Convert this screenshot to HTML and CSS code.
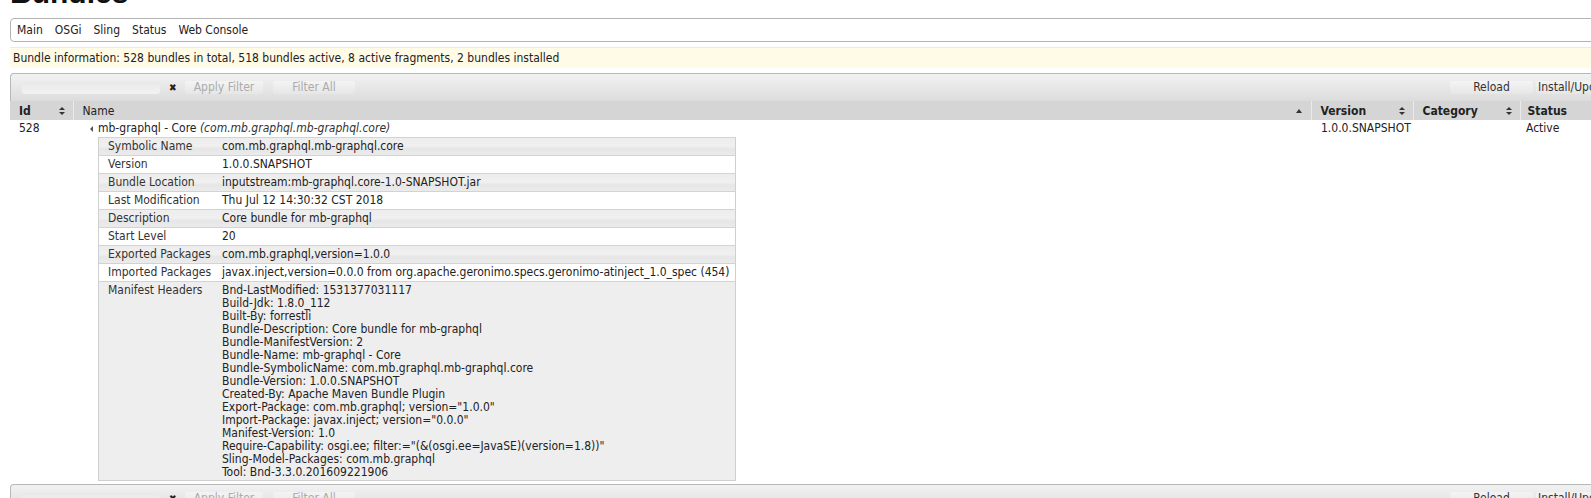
FILE: index.html
```html
<!DOCTYPE html>
<html>
<head>
<meta charset="utf-8">
<link rel="stylesheet" href="styles.css">
</head>
<body>
<div class="page">
  <h1 class="title">Bundles</h1>
  <div class="nav">
    <span>Main</span><span>OSGi</span><span>Sling</span><span>Status</span><span>Web Console</span>
  </div>
  <div class="info">Bundle information: 528 bundles in total, 518 bundles active, 8 active fragments, 2 bundles installed</div>

  <div class="toolbar">
    <div class="tb-left">
      <span class="filter-input"></span>
      <span class="clear">&#10006;</span>
      <span class="btn disabled apply">Apply Filter</span>
      <span class="btn disabled fall">Filter All</span>
    </div>
    <div class="tb-right">
      <span class="btn reload">Reload</span>
      <span class="btn install">Install/Update...</span>
    </div>
  </div>

  <table class="bundles">
    <colgroup>
      <col class="c-id"><col class="c-name"><col class="c-ver"><col class="c-cat"><col class="c-st">
    </colgroup>
    <thead>
      <tr>
        <th><span class="hd">Id</span><span class="sort both"></span></th>
        <th class="nm"><span class="hd">Name</span><span class="sort up"></span></th>
        <th><span class="hd">Version</span><span class="sort both"></span></th>
        <th><span class="hd">Category</span><span class="sort both"></span></th>
        <th class="sth"><span class="hd">Status</span></th>
      </tr>
    </thead>
    <tbody>
      <tr class="row">
        <td class="id">528</td>
        <td class="name">
          <div class="name-line"><span class="tri"></span>mb-graphql - Core <i>(com.mb.graphql.mb-graphql.core)</i></div>
          <table class="details">
            <tr class="g"><td class="k">Symbolic Name</td><td>com.mb.graphql.mb-graphql.core</td></tr>
            <tr><td class="k">Version</td><td>1.0.0.SNAPSHOT</td></tr>
            <tr class="g"><td class="k">Bundle Location</td><td>inputstream:mb-graphql.core-1.0-SNAPSHOT.jar</td></tr>
            <tr><td class="k">Last Modification</td><td>Thu Jul 12 14:30:32 CST 2018</td></tr>
            <tr class="g"><td class="k">Description</td><td>Core bundle for mb-graphql</td></tr>
            <tr><td class="k">Start Level</td><td>20</td></tr>
            <tr class="g"><td class="k">Exported Packages</td><td>com.mb.graphql,version=1.0.0</td></tr>
            <tr><td class="k">Imported Packages</td><td>javax.inject,version=0.0.0 from org.apache.geronimo.specs.geronimo-atinject_1.0_spec (454)</td></tr>
            <tr class="mf"><td class="k">Manifest Headers</td><td class="lines">
              <div>Bnd-LastModified: 1531377031117</div>
              <div>Build-Jdk: 1.8.0_112</div>
              <div>Built-By: forrestli</div>
              <div>Bundle-Description: Core bundle for mb-graphql</div>
              <div>Bundle-ManifestVersion: 2</div>
              <div>Bundle-Name: mb-graphql - Core</div>
              <div>Bundle-SymbolicName: com.mb.graphql.mb-graphql.core</div>
              <div>Bundle-Version: 1.0.0.SNAPSHOT</div>
              <div>Created-By: Apache Maven Bundle Plugin</div>
              <div>Export-Package: com.mb.graphql; version="1.0.0"</div>
              <div>Import-Package: javax.inject; version="0.0.0"</div>
              <div>Manifest-Version: 1.0</div>
              <div>Require-Capability: osgi.ee; filter:="(&amp;(osgi.ee=JavaSE)(version=1.8))"</div>
              <div>Sling-Model-Packages: com.mb.graphql</div>
              <div>Tool: Bnd-3.3.0.201609221906</div>
            </td></tr>
          </table>
        </td>
        <td class="ver">1.0.0.SNAPSHOT</td>
        <td></td>
        <td class="st">Active</td>
      </tr>
    </tbody>
  </table>

  <div class="toolbar bottom">
    <div class="tb-left">
      <span class="filter-input"></span>
      <span class="clear">&#10006;</span>
      <span class="btn disabled apply">Apply Filter</span>
      <span class="btn disabled fall">Filter All</span>
    </div>
    <div class="tb-right">
      <span class="btn reload">Reload</span>
      <span class="btn install">Install/Update...</span>
    </div>
  </div>
</div>
</body>
</html>
```

FILE: styles.css
```css
html, body {
  margin: 0;
  padding: 0;
  background: #fff;
  overflow: hidden;
}
body {
  font-family: "DejaVu Sans Condensed", "DejaVu Sans", sans-serif;
  font-size: 12px;
  color: #222;
}
.page {
  width: 1650px;
  padding: 0 0 0 10px;
}
.title {
  font-family: "Liberation Sans", Arial, sans-serif;
  font-size: 30px;
  font-weight: bold;
  line-height: 30px;
  margin: -22px 0 0 0;
  height: 30px;
  color: #111;
}
.nav {
  margin-top: 10px;
  height: 22px;
  border: 1px solid #b4b4b4;
  border-radius: 4px;
  display: flex;
  align-items: center;
  padding-left: 6px;
  gap: 12px;
  color: #222;
}
.info {
  margin-top: 5px;
  height: 21px;
  line-height: 21px;
  background: #fffbe6;
  border-top: 1px solid #f3ecc8;
  padding-left: 3px;
  box-sizing: border-box;
}
.toolbar {
  margin-top: 5px;
  height: 28px;
  box-sizing: border-box;
  border: 1px solid #b8b8b8;
  border-bottom: none;
  border-radius: 4px 0 0 0;
  background: linear-gradient(#f2f2f2, #dcdcdc);
  display: flex;
  justify-content: space-between;
  align-items: center;
}
.tb-left, .tb-right {
  display: flex;
  align-items: center;
}
.filter-input {
  margin-left: 11px;
  width: 138px;
  height: 12px;
  border-radius: 3px;
  background: linear-gradient(#e9e9e9, #f2f2f2);
}
.clear {
  margin-left: 9px;
  font-size: 10px;
  color: #222;
  width: 10px;
}
.btn {
  height: 13px;
  line-height: 13px;
  border-radius: 3px;
  background: linear-gradient(#f4f4f4, #e6e6e6);
  text-align: center;
  color: #333;
}
.btn.disabled { color: #ababab; }
.apply { margin-left: 6px; width: 78px; }
.fall { margin-left: 10px; width: 82px; }
.reload { width: 83px; margin-right: 3px; }
.install { width: 103px; text-align: left; padding-left: 2px; margin-right: 18px; overflow: hidden; white-space: nowrap; }
.bundles {
  border-collapse: collapse;
  table-layout: fixed;
  width: 1650px;
}
.c-id { width: 63px; }
.c-name { width: 1238px; }
.c-ver { width: 102px; }
.c-cat { width: 107px; }
.c-st { width: 140px; }
.bundles th {
  background: #d5d5d5;
  height: 19px;
  padding: 0 0 0 9px;
  text-align: left;
  border-left: 1px solid #ebebeb;
  position: relative;
  font-size: 12px;
}
.bundles th.sth { padding-left: 7px; }
.bundles th:first-child { border-left: none; }
.hd { font-weight: bold; }
.nm .hd { font-weight: normal; }
.sort {
  position: absolute;
  right: 10px;
  top: 6px;
  width: 0;
  height: 0;
}
.sort.both::before, .sort.both::after, .sort.up::before {
  content: "";
  position: absolute;
  left: -4px;
  border-left: 3.5px solid transparent;
  border-right: 3.5px solid transparent;
}
.sort.both::before { top: 0; border-bottom: 3.5px solid #333; }
.sort.both::after { top: 5px; border-top: 3.5px solid #333; }
.sort.up::before { top: 2px; border-bottom: 4px solid #333; }
.nm .sort { right: 11px; }
.bundles td {
  vertical-align: top;
  padding: 0;
}
.row td.id { padding: 0 0 0 9px; line-height: 17px; }
.row td.ver { padding: 0 0 0 10px; line-height: 17px; }
.row td.st { padding: 0 0 0 6px; line-height: 17px; }
.name-line {
  height: 17px;
  line-height: 17px;
  padding: 0 0 0 25px;
  position: relative;
}
.tri {
  position: absolute;
  left: 17px;
  top: 6px;
  border-top: 3px solid transparent;
  border-bottom: 3px solid transparent;
  border-right: 3px solid #555;
}
.name-line i { color: #333; }
.details {
  margin-left: 25px;
  border-collapse: collapse;
  width: 638px;
  border: 1px solid #cfcfcf;
}
.details td {
  height: 17px;
  line-height: 17px;
  border-top: 1px solid #d3d3d3;
  padding: 0 0 0 8px;
  white-space: nowrap;
  vertical-align: top;
}
.details td.k { width: 106px; padding-left: 9px; color: #333; }
.details tr { background: #fff; }
.details tr.g { background: linear-gradient(#ededed 0%, #f0f0f0 45%, #e6e6e6 60%, #ececec 100%); }
.details tr.mf { background: #eeeeee; }
.details td.lines { padding-top: 2px; padding-bottom: 1px; }
.lines div { line-height: 13px; }
.mf td.k { padding-top: 2px; line-height: 13px; }
.toolbar.bottom { margin-top: 3px; }
```
